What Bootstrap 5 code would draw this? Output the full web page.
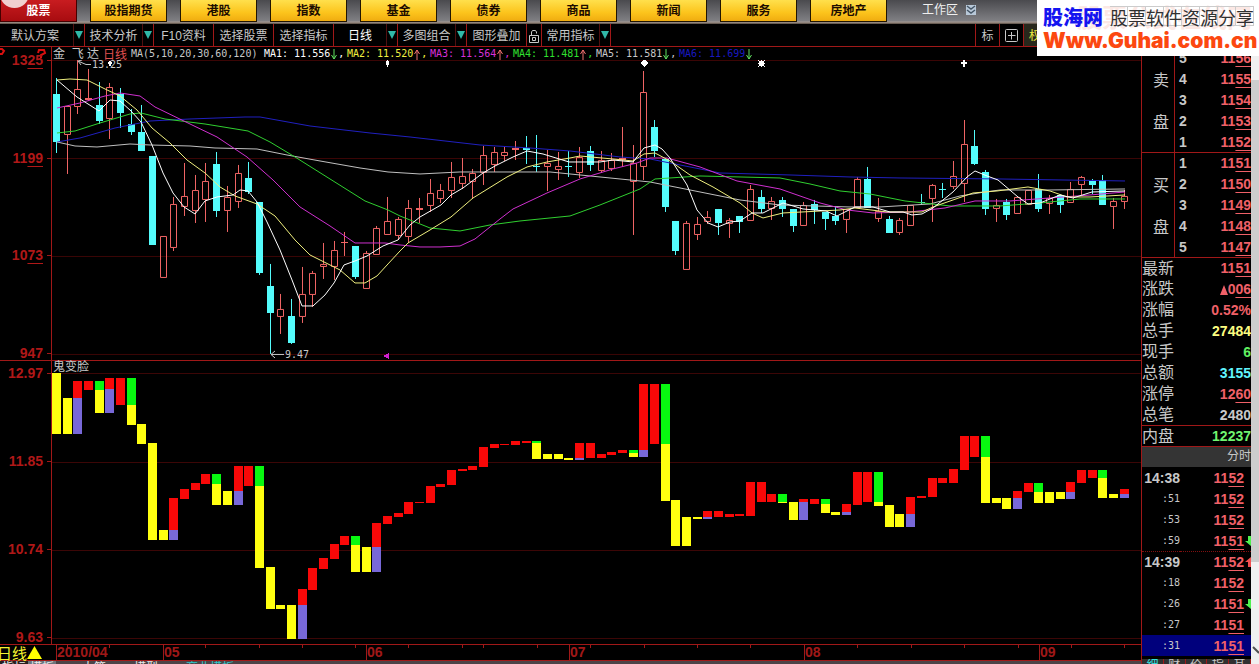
<!DOCTYPE html>
<html lang="zh-CN">
<head>
<meta charset="utf-8">
<meta name="viewport" content="width=device-width, initial-scale=1">
<title>日线 - 金飞达</title>
<link href="https://cdn.jsdelivr.net/npm/bootstrap@5.3.0/dist/css/bootstrap.min.css" rel="stylesheet">
<style>
  :root { --line: #a01818; --grid: #3c0606; --up: #f06464; --down: #54fcfc; --ink: #c8c8c8; }
  body { background: #000; color: var(--ink); font: 12px/14px "Liberation Sans", "Noto Sans CJK SC", sans-serif; }
  button { font: inherit; color: inherit; background: none; border: 0; padding: 0; white-space: nowrap; }
  .market-bar { height: 24px; gap: 13px; background: linear-gradient(#4a4a4e, #808084 21px, #a89c94 22px, #54483f); }
  .market-bar .market { width: 77px; height: 22px; border: 1px solid #201400; border-top: 0; color: #1c0c00; font-weight: 700; line-height: 20px; background: linear-gradient(#ffe04c, #fcc41c 60%, #f0ac10); }
  .market-bar .market.active { color: #fff; border-color: #400; background: linear-gradient(#c81c20, #a80c10); position: relative; overflow: hidden; }
  .knob { left: -1px; top: -20px; width: 29px; height: 28px; background: #f0d0d0; border-radius: 50%; }
  .workspace { margin-left: 22px; color: #f0f0f0; height: 20px; }
  .tool-bar { height: 23px; border-bottom: 1px solid var(--line); }
  .tool { width: 60px; border-right: 1px solid var(--line); padding-top: 2px; }
  .tool.split { width: 58px; border-color: #501010; }
  .tool.wide { width: 74px; padding-right: 3px; border-color: #501010; }
  .tool.mid { width: 53px; color: #fff; border-color: #501010; }
  .tool.slim { width: 15px; }
  .tool.sq { width: 24px; }
  .tool.lead-edge { width: 25px; border-left: 1px solid var(--line); }
  .drop { width: 11px; border-right: 1px solid var(--line); }
  .drop::before { content: ""; display: block; margin: 0 auto; width: 8px; border: 4px solid transparent; border-top: 8px solid #30b8a8; border-bottom: 0; }
  .weights { width: 235px; color: #e8e840; background: #28281c; padding: 2px 0 0 5px; text-align: left; }
  .price-pane { flex: 314 1 0; min-height: 0; border-bottom: 1px solid var(--line); }
  .face-pane { flex: 284 1 0; min-height: 0; border-bottom: 1px solid var(--line); }
  .scale { width: 52px; border-right: 1px solid var(--line); padding: 6px 8px 0 0; color: #b01818; font-weight: 700; font-size: 14px; text-align: right; position: relative; }
  .scale.lower { padding-top: 5px; }
  .scale div { position: relative; }
  .scale div::after { content: ""; position: absolute; right: -8px; top: 7px; width: 4px; height: 1px; background: var(--line); }
  .hints { left: 0; top: 0; }
  .plot { min-width: 0; }
  .plot svg { flex: 1 1 0; min-height: 0; width: 100%; display: block; }
  .legend-row { height: 13px; font: 10px/14px "DejaVu Sans Mono", "Noto Sans CJK SC", monospace; white-space: pre; }
  .legend-row .stock { width: 51px; padding-left: 1px; font: 12px/14px "Liberation Sans", "Noto Sans CJK SC", sans-serif; }
  .legend-row .period { width: 28px; color: #e05050; font: 12px/14px "Noto Sans CJK SC", sans-serif; }
  .legend-row .params { width: 133px; }
  .legend-row .ma { width: 83px; }
  .legend-row svg { flex: none; width: 8px; height: 11px; fill: none; margin-top: 2px; }
  .face-title { height: 12px; line-height: 12px; padding-left: 1px; }
  .dates { height: 16px; border-bottom: 1px solid var(--line); color: #a01818; font: 700 14px/15px "Liberation Sans", sans-serif; }
  .cycle { width: 56px; color: #f4f430; font: 15px/15px "Noto Sans CJK SC", sans-serif; }
  .cycle span { margin-left: -3px; }
  .months { display: grid; grid-template-columns: 107fr 203fr 203fr 235fr 235fr 102fr; position: relative; }
  .months span { border-left: 1px solid var(--line); height: 15px; }
  .ticks { left: 0; top: 0; width: 100%; height: 3px; }
  .tab-strip { height: 3px; overflow: hidden; background: #4c4448; color: #e8e8e8; }
  .tab-strip button { height: 14px; padding: 0 2px; }
  .quote-panel { width: 110px; border-left: 1px solid var(--line); overflow: hidden; }
  .quote-panel table { width: 100%; border-collapse: separate; border-spacing: 0; font: 700 14px/20px "Liberation Sans", sans-serif; }
  .quote-panel tr { height: 21px; }
  .quote-panel td, .quote-panel th { padding: 0; height: 21px; }
  .quote-panel u, .scale u { text-underline-offset: 3px; text-decoration-thickness: 1px; }
  .book .side { width: 33px; border-right: 1px solid var(--line); font: 16px/42px "Noto Sans CJK SC", sans-serif; text-align: center; padding-left: 6px; vertical-align: middle; }
  .book .level { padding-left: 4px; }
  .line-top > * { border-top: 1px solid var(--line); }
  .num { text-align: right; }
  .red { color: #f06068; }
  .stats th { font: 16px/18px "Noto Sans CJK SC", sans-serif; text-align: left; vertical-align: top; }
  .tape-head { height: 21px; background: #343434; border-top: 1px solid var(--line); text-align: right; line-height: 19px; }
  .tape th { width: 38px; text-align: right; }
  .tape th.sec { font: 10px/20px "DejaVu Sans Mono", monospace; }
  .tape .px { width: 64px; }
  .tape .dash > * { border-top: 1px dotted #801010; }
  .tape svg { width: 6px; height: 12px; display: block; margin-left: auto; }
  .tape .now > * { background: #00007c; }
  .side-tabs { margin-top: 3px; height: 5px; overflow: hidden; background: #303030; }
  .side-tabs button { width: 24px; line-height: 12px; border-right: 1px solid var(--line); }
  .scroll-rail { width: 8px; background: #f0f0f0; padding-top: 33px; }
  .scroll-thumb { height: 82.6%; background: #cdcdcd; }
  .promo { width: 222px; height: 56px; background: #fff; overflow: hidden; padding: 6px 5px 0 6px; z-index: 5; font-family: "Noto Sans CJK SC", sans-serif; }
  .promo .ghost { left: 40px; top: 0; font-size: 25px; line-height: 32px; font-weight: 700; color: #fce8e4; white-space: nowrap; }
  .promo .brand { color: #1414f0; font-size: 20px; line-height: 22px; font-weight: 900; }
  .promo .slogan { color: #303030; font-size: 18px; line-height: 20px; height: 20px; border: 1px solid #ccc; border-width: 1px 0; background: repeating-linear-gradient(90deg, transparent 0 17px, #ccc 17px 18px); }
  .promo .site { color: #fc4810; font: 900 21px/26px Inter, "Liberation Sans", sans-serif; text-decoration: none; }
</style>
</head>
<body class="vh-100 overflow-hidden d-flex flex-column position-relative">

<nav class="market-bar d-flex flex-shrink-0" aria-label="市场">
  <button class="market active"><span class="knob position-absolute"></span>股票</button>
  <button class="market">股指期货</button>
  <button class="market">港股</button>
  <button class="market">指数</button>
  <button class="market">基金</button>
  <button class="market">债券</button>
  <button class="market">商品</button>
  <button class="market">新闻</button>
  <button class="market">服务</button>
  <button class="market">房地产</button>
  <button class="workspace d-flex align-items-center">工作区
    <svg class="ms-2" width="10" height="10" viewBox="0 0 10 10"><path d="M0 0h10v10H0z" fill="#b8c8d8"/><path d="M1 1l4 3 4-3M1 5l4 3 4-3" fill="none" stroke="#456" stroke-width="1.400"/></svg>
  </button>
</nav>

<div class="tool-bar d-flex flex-shrink-0" role="toolbar" aria-label="工具">
  <button class="tool wide">默认方案</button><button class="drop" aria-label="方案列表"></button>
  <button class="tool split">技术分析</button><button class="drop" aria-label="分析列表"></button>
  <button class="tool">F10资料</button>
  <button class="tool">选择股票</button>
  <button class="tool">选择指标</button>
  <button class="tool mid">日线</button><button class="drop" aria-label="周期列表"></button>
  <button class="tool split">多图组合</button><button class="drop" aria-label="组合列表"></button>
  <button class="tool">图形叠加</button>
  <button class="tool slim" aria-label="锁定"><svg width="12" height="14" viewBox="0 0 12 14" fill="none" stroke="#c8c8c8"><path d="M1.500 6.500h9v7h-9zM3.500 6V3l1-1.500h3L8.500 3v1.500M4.500 8.500h3v3h-3z"/></svg></button>
  <button class="tool split">常用指标</button><button class="drop" aria-label="指标列表"></button>
  <button class="tool sq lead-edge ms-auto">标</button>
  <button class="tool sq" aria-label="窗口"><svg width="14" height="14" viewBox="0 0 14 14" fill="none" stroke="#c8c8c8"><rect x=".5" y=".5" width="12" height="12" rx="1"/><path d="M3 6.500h7.500M6.500 3v7.500"/></svg></button>
  <button class="weights">权</button>
</div>

<main class="d-flex flex-grow-1" style="min-height:0">
  <div class="d-flex flex-column flex-grow-1" style="min-width:0">
    <section class="price-pane d-flex">
      <div class="scale d-flex flex-column justify-content-between flex-shrink-0">
        <svg class="hints position-absolute" width="50" height="12" viewBox="0 0 50 12" fill="none" stroke="#d81010" stroke-width="2"><path d="M0 2h2l2 2-2 3H0M38 6l1-3h5l1 3-4 2v3"/></svg>
        <div>13<u>25</u></div><div>11<u>99</u></div><div>10<u>73</u></div><div>947</div>
      </div>
      <div class="plot d-flex flex-column flex-grow-1">
        <div class="legend-row d-flex" id="legend">
          <span class="stock">金&nbsp; 飞 达</span><span class="period">日线</span><span class="params">MA(5,10,20,30,60,120)</span>
        </div>
        <svg id="price" viewBox="52 60 1089 300" preserveAspectRatio="none" role="img" aria-label="日线蜡烛图"></svg>
      </div>
    </section>

    <section class="face-pane d-flex">
      <div class="scale lower d-flex flex-column justify-content-between flex-shrink-0">
        <div>12.97</div><div>11.85</div><div>10.74</div><div>9.63</div>
      </div>
      <div class="plot d-flex flex-column flex-grow-1">
        <div class="face-title">鬼变脸</div>
        <svg id="face" viewBox="52 373 1089 271" preserveAspectRatio="none" role="img" aria-label="鬼变脸指标"></svg>
      </div>
    </section>

    <div class="dates d-flex flex-shrink-0">
      <div class="cycle d-flex"><span>日线</span><svg width="15" height="15" viewBox="0 0 15 15"><path d="M7.500 1L15 14H0z" fill="#ff0"/></svg></div>
      <div class="months flex-grow-1">
        <span>2010/04</span><span>05</span><span>06</span><span>07</span><span>08</span><span>09</span>
        <svg class="ticks position-absolute" id="ticks" viewBox="56 0 1085 3" preserveAspectRatio="none"></svg>
      </div>
    </div>
    <div class="tab-strip d-flex flex-shrink-0">
      <button style="background:#282020">指标</button><button class="bg-secondary">模板</button><button class="ms-4">大笔</button><button class="ms-4">模型</button><button class="ms-4" style="color:#30c8c8">商业模板</button>
    </div>
  </div>

  <aside class="quote-panel flex-shrink-0 d-flex flex-column">
    <table class="book" aria-label="买卖盘">
      <tbody id="sell"></tbody><tbody id="buy"></tbody>
    </table>
    <table class="stats" aria-label="行情">
      <tr class="line-top"><th>最新</th><td class="num red">11<u>51</u></td></tr>
      <tr><th>涨跌</th><td class="num red"><svg width="8" height="10" viewBox="0 0 8 10"><path d="M4 0l4 10H0z" fill="#f06068"/></svg>0<u>06</u></td></tr>
      <tr><th>涨幅</th><td class="num red">0.52%</td></tr>
      <tr><th>总手</th><td class="num" style="color:#fcfc80">27484</td></tr>
      <tr><th>现手</th><td class="num" style="color:#60f060">6</td></tr>
      <tr><th>总额</th><td class="num" style="color:#60f4fc">3155</td></tr>
      <tr><th>涨停</th><td class="num red">12<u>60</u></td></tr>
      <tr><th>总笔</th><td class="num">2480</td></tr>
      <tr class="line-top"><th>内盘</th><td class="num" style="color:#70f470">12237</td></tr>
    </table>
    <div class="tape-head flex-shrink-0">分时</div>
    <table class="tape" aria-label="分时成交"><tbody id="tape"></tbody></table>
    <div class="side-tabs d-flex flex-shrink-0"><button style="color:#30e0e0">细</button><button>财</button><button>价</button><button>指</button><button>其</button></div>
  </aside>
  <div class="scroll-rail flex-shrink-0 position-relative">
    <div class="scroll-thumb"></div>
    <svg class="position-absolute bottom-0 mb-2" width="8" height="10" viewBox="0 0 8 10" fill="none" stroke="#505050" stroke-width="2"><path d="M2 1l6 6"/></svg>
  </div>
</main>

<div class="promo position-absolute top-0 end-0">
  <div class="ghost position-absolute" aria-hidden="true">股票公式在线网</div>
  <div class="d-flex justify-content-between position-relative"><span class="brand">股海网</span><span class="slogan">股票软件资源分享</span></div>
  <a class="site position-relative" href="#">Www.Guhai.com.cn</a>
</div>

<script src="https://cdn.jsdelivr.net/npm/bootstrap@5.3.0/dist/js/bootstrap.bundle.min.js"></script>
<script>
const $ = id => document.getElementById(id);
const dayX = i => Math.floor(56.5 + i * 10.677);   // pixel column of trading day i

// U = rising day, D = falling day: high, body top, body bottom, low
const days = `D78,94,142,153 U106,106,135,174 U60,89,107,114 U69,98,100,101 D82,105,121,124 U83,87,119,139 D88,94,113,128 D109,124,132,135 D105,132,151,151 D156,156,245,245
U236,236,278,278 U197,204,248,251 U163,196,207,216 U175,190,211,223 U163,181,200,222 D152,164,211,217 U186,197,211,232 U165,173,202,208 D162,178,192,194 D202,202,273,275
D264,286,313,354 U294,309,317,334 D299,316,343,344 U267,294,317,323 U271,273,295,307 U243,264,267,279 U241,250,267,280 U232,242,243,256 D246,246,277,279 U251,253,289,289
U226,228,255,255 U197,221,235,235 U217,219,236,240 U200,208,237,243 U198,208,210,223 U179,193,206,212 U184,190,199,203 U162,177,191,198 U158,176,184,189 U169,173,182,199
U146,155,173,185 U147,152,165,172 U147,152,156,161 U141,148,150,160 D136,148,150,164 D135,166,167,172 U150,163,167,191 U152,166,170,180 D151,166,167,177 U147,157,173,178
D146,151,165,171 U151,160,171,173 U153,160,169,171 U127,158,160,167 U145,163,182,235 U71,92,167,180 D120,127,151,157 D159,159,207,212 D221,221,251,255 U221,223,270,270
U217,224,235,240 U211,217,222,224 D209,209,223,235 U218,220,224,238 D216,216,222,233 U185,189,221,221 D190,197,209,213 U197,201,209,220 D197,200,209,217 D209,209,226,232
U202,205,226,226 D200,204,210,224 D212,212,219,230 D206,216,221,225 U209,209,220,233 U177,179,208,208 D167,179,208,208 U198,211,219,222 D216,219,233,233 U218,220,233,235
U205,205,226,226 D194,202,203,205 U184,185,199,222 D183,189,190,198 U161,176,187,189 U120,144,184,202 D130,146,164,165 D170,172,209,215 U199,205,209,222 D199,202,215,220
U197,197,214,214 U190,190,205,205 D174,189,209,212 U195,198,204,214 D195,195,205,213 U182,189,203,203 U176,177,185,195 D179,181,185,194 D175,180,205,205 U198,201,207,229 U190,196,202,209`.split(/\s+/);

const averages = [
  ['#2020c0', '57,142 80,138 115,128 150,121 190,119 245,117 260,117 310,126 370,133 410,137 480,145 530,148 570,151 620,157 650,159 680,165 720,173 790,175 850,177 900,178 1000,179 1125,181'],
  ['#c0c0c0', '57,142 75,146 97,147 130,144 150,145 190,146 215,148 257,149 287,155 320,161 360,168 388,172 420,174 460,172 550,172 590,176 620,179 650,182 690,190 740,200 780,205 850,207 880,207 930,204 960,196 985,192 1000,190 1050,190 1125,189'],
  ['#30d030', '57,133 75,131 100,123 130,114 141,113 165,119 205,124 248,131 270,142 295,157 330,179 365,201 388,210 400,216 430,228 460,231 490,225 520,221 570,216 600,205 640,189 655,179 700,176 780,178 810,184 840,191 870,194 905,201 950,206 1000,206 1040,203 1080,199 1125,199'],
  ['#d030d0', '57,108 80,103 105,96 120,93 140,96 155,107 190,124 217,137 247,157 273,180 300,207 330,226 355,243 385,243 400,245 420,247 440,247 460,246 475,239 500,219 513,209 547,193 580,179 613,169 637,163 650,158 667,158 700,167 737,181 780,189 820,203 847,210 873,213 910,212 945,208 975,201 1010,201 1050,198 1090,195 1125,192'],
  ['#f0f080', '57,80 70,79 87,80 105,89 120,96 137,110 152,128 170,143 187,160 205,173 220,187 235,196 257,204 275,216 295,240 310,255 340,270 355,283 365,283 377,276 388,264 400,251 408,243 430,230 451,217 473,198 507,177 527,167 547,162 570,158 580,156 613,159 633,161 644,154 655,153 670,161 690,175 713,187 740,203 752,213 763,218 783,213 840,210 855,208 887,212 922,212 933,207 953,200 973,193 997,191 1028,187 1050,191 1067,197 1090,197 1125,195'],
  ['#ffffff', '57,80 77,97 99,111 110,100 120,101 131,111 141,122 152,145 163,173 173,193 184,207 195,214 205,201 217,197 233,195 240,190 248,191 257,202 267,222 280,250 292,280 302,306 313,306 325,295 334,283 344,265 355,261 367,256 383,246 398,240 410,225 420,217 441,205 451,195 463,188 483,173 495,166 513,157 527,151 543,154 569,162 600,162 613,160 633,162 644,148 655,145 662,149 670,158 687,185 697,210 708,223 718,227 730,222 740,221 752,213 763,213 783,203 803,209 826,211 837,216 855,207 873,207 890,212 903,212 912,215 922,214 933,208 953,192 967,177 975,171 987,176 998,180 1018,197 1028,204 1040,203 1060,195 1073,198 1092,192 1125,191']
];

const grid = rows => rows.map(y => `<path d="M52 ${y}.5H1141" stroke="var(--grid)"/>`).join('');

let out = grid([60, 158, 256, 354]);
days.forEach((d, i) => {
  const [h, t, b, l] = d.slice(1).split(',').map(Number), x = dayX(i), c = x + .5;
  if (d[0] === 'D')
    out += `<path d="M${c} ${h}V${l}" stroke="var(--down)"/><rect x="${x - 3}" y="${t}" width="7" height="${b - t}" fill="var(--down)"/>`;
  else if (b - t < 3)
    out += `<path d="M${c} ${h}V${l}" stroke="var(--up)"/><rect x="${x - 3}" y="${t}" width="7" height="${b - t}" fill="var(--up)"/>`;
  else
    out += `<path d="M${c} ${h}V${t}M${c} ${b}V${l}M${x - 2.5} ${t + .5}h6V${b - .5}h-6z" fill="none" stroke="var(--up)"/>`;
});
averages.forEach(([color, pts]) => out += `<polyline points="${pts}" fill="none" stroke="${color}"/>`);
out += '<g fill="#fff"><path d="M110 60l2 3-2 4-2-4zM387.500 59l2 4-2 4-2-4zM644.500 59l4 4-4 4-4-4z"/><path d="M963 60h2v2h2v2h-2v3h-2v-3h-2v-2h2z"/><path d="M759 61h5v5h-5z"/></g>'
  + '<g stroke="#fff" shape-rendering="auto"><path d="M758 60l7 7M765 60l-7 7M761.500 60v7M758 63.500h7"/></g>'
  + '<path d="M389 353v6l-6-3z" fill="#d020d0"/>'
  + '<g fill="none" stroke="#c8c8c8"><path d="M91 64.500h-5l-7-3M82 60l-4 1 3 4M284 354.500h-13M275 351l-4 3.500 4 3.500"/></g>'
  + '<g fill="#c8c8c8" font-family="DejaVu Sans Mono, monospace" font-size="10" shape-rendering="auto"><text x="92" y="68">13.25</text><text x="285" y="358">9.47</text></g>';
$('price').innerHTML = `<g shape-rendering="crispEdges">${out}</g>`;

// Indicator columns: colour letter followed by the y range of each segment
const columns = `Y373-434 Y398-434 R381-398P434 R381-390 G381-390Y413 R378-389P413 R378-405 G378-405Y425 Y424-444 Y443-540
Y530-540 R498-530P540 R489-499 R483-490 R474-484 G474-484Y505 Y491-505 R466-491P505 R466-486 G466-486Y568
Y567-609 Y605-609 Y605-639 R589-605P639 R568-590 R558-569 R544-559 R536-545 G536-545Y572 Y547-572
R523-547P572 R516-524 R513-517 R502-514 R502-503 R486-503 R484-487 R470-485 R469-471 R466-470
R447-467 R444-448 R444-445 R441-445 R441-443 G441-443Y459 Y454-459 Y454-459 Y458-460 R443-458P460
R443-458 R454-458 R452-455 R450-453 G450-453Y457 R384-450P457 R384-444 G384-444Y501 Y500-546 Y517-546
Y517-519 R511-517P519 R511-517 R514-517 R514-516 R482-516 R482-502 R494-502 G494-502Y503 Y502-520
R499-502P520 R499-504 G499-504Y513 Y512-515 R504-512P515 R472-505 R472-502 G472-502Y506 Y505-527 Y514-527
R497-514P527 R496-498 R478-497 R478-483 R469-483 R436-470 R436-457 G436-457Y503 Y498-503 Y498-509
R491-498P509 R483-492 G483-492Y503 Y492-503 Y492-499 R482-492P499 R470-483 R470-478 G470-478Y498 Y494-498 R489-494P498`.split(/\s+/);
const paint = { R: '#f80808', Y: '#ffff10', G: '#08f810', P: '#7868d8' };
$('face').innerHTML = `<g shape-rendering="crispEdges">${grid([373, 462, 550, 638])}` + columns.map((s, i) => {
  const [, a, y0, y1, b, y2] = s.match(/(\w)(\d+)-(\d+)(?:(\w)(\d+))?/), x = dayX(i) - 4;
  return `<rect x="${x}" y="${y0}" width="9" height="${y1 - y0}" fill="${paint[a]}"/>`
    + (b ? `<rect x="${x}" y="${y1}" width="9" height="${y2 - y1}" fill="${paint[b]}"/>` : '');
}).join('') + '</g>';

$('ticks').innerHTML = [67, 109, 205, 259, 302, 355, 408, 462, 483, 537, 590, 644, 697, 750, 857, 911, 964, 1018, 1071, 1124]
  .map(x => `<path d="M${x}.5 0v3" stroke="#a01818"/>`).join('');

const down = 'M4 0v10M1.500 6l2.500 4 2.500-4', up = 'M4 11V1M1.500 5L4 1l2.500 4';
[['MA1', '11.556', '#fff', 0], ['MA2', '11.520', '#f0f040', 1], ['MA3', '11.564', '#d830d8', 1], ['MA4', '11.481', '#30e030', 1], ['MA5', '11.581', '#c8c8c8', 0], ['MA6', '11.699', '#1818c0', 0]]
  .forEach(([n, v, c, rise], k) => $('legend').insertAdjacentHTML('beforeend',
    `<span class="ma d-flex" style="color:${c}">${n}: ${v}<svg viewBox="0 0 8 11" stroke="${rise ? '#f07070' : '#60e060'}"><path d="${rise ? up : down}"/></svg>${k < 5 ? ',' : ''}</span>`));

const price = p => `<td class="num red px">${p.slice(0, 2)}<u>${p.slice(2)}</u></td>`;
const book = (id, name, levels, first, cls) => $(id).innerHTML = levels.map((n, k) =>
  `<tr class="${k ? '' : cls}">${k ? '' : `<th class="side" rowspan="5">${name}</th>`}<td class="level">${n}</td>${price(String(first - k))}</tr>`).join('');
book('sell', '卖<br>盘', [5, 4, 3, 2, 1], 1156, '');
book('buy', '买<br>盘', [1, 2, 3, 4, 5], 1151, 'line-top');

const mark = { d: '<svg viewBox="0 0 6 12"><path d="M3 1h3v10L0 6h3z" fill="#50f050"/></svg>', u: '<svg viewBox="0 0 6 12"><path d="M3 11h3V1L0 6h3z" fill="#f05050"/></svg>' };
$('tape').innerHTML = [['14:38', '1152'], [':51', '1152'], [':53', '1152'], [':59', '1151', 'd'], ['14:39', '1152', 'u'], [':18', '1152'], [':26', '1151', 'd'], [':27', '1151'], [':31', '1151']]
  .map(([t, p, m], k) => `<tr class="${k === 4 ? 'dash' : k === 8 ? 'now' : ''}"><th class="${t[0] === ':' ? 'sec' : ''}">${t}</th>${price(p)}<td>${mark[m] || ''}</td></tr>`).join('');
</script>
</body>
</html>
